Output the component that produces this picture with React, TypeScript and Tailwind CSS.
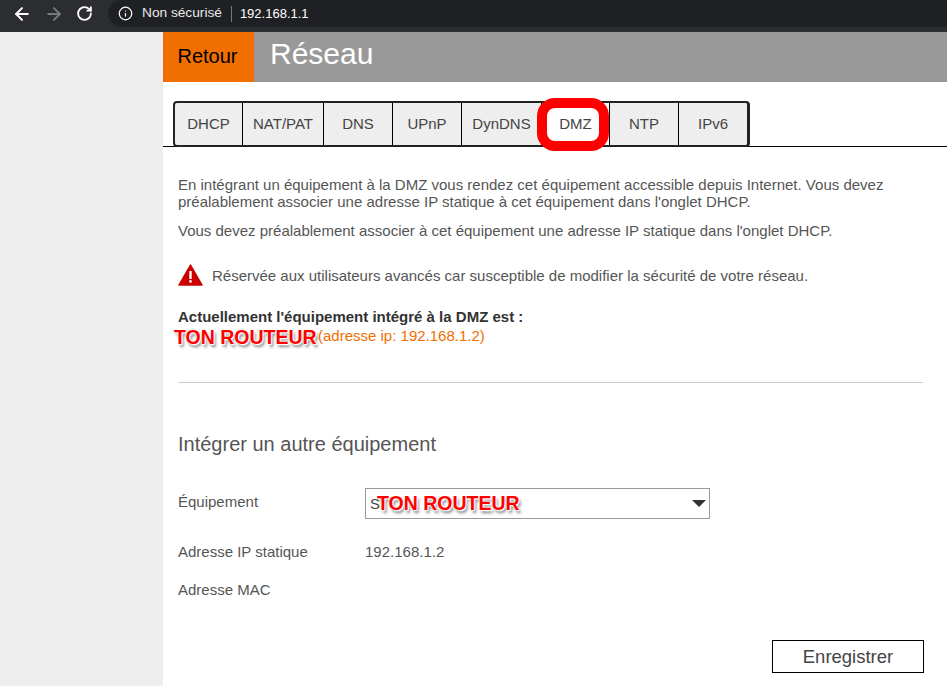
import { ArrowLeft, ArrowRight, RotateCw, Info } from 'lucide-react';

const tabs = [
  { label: 'DHCP', w: 'w-[67px]' },
  { label: 'NAT/PAT', w: 'w-[81px]' },
  { label: 'DNS', w: 'w-[69px]' },
  { label: 'UPnP', w: 'w-[69px]' },
  { label: 'DynDNS', w: 'w-[80px]' },
  { label: 'DMZ', w: 'w-[68px]', active: true },
  { label: 'NTP', w: 'w-[69px]' },
  { label: 'IPv6', w: 'w-[69px]' },
];

function Stamp({ className }: { className: string }) {
  return (
    <span
      className={`absolute font-['Liberation_Sans',sans-serif] font-bold text-[19.5px] leading-[22px] whitespace-nowrap text-[#ff0000] [text-shadow:0_0_2px_#fff,0_0_3px_#fff,1px_1px_1px_#fff,2px_3px_3px_#777] ${className}`}
    >
      TON ROUTEUR
    </span>
  );
}

export default function App() {
  return (
    <div className="h-[686px] w-[947px] overflow-hidden bg-white font-['Liberation_Sans',Arial,sans-serif] text-[#555]">
      {/* Browser bar */}
      <div className="flex h-[32px] items-center bg-[#2c2d30]">
        <div className="flex items-center gap-[9px] pl-[12px] pb-[5px]">
          <ArrowLeft className="h-[20px] w-[20px] text-white" strokeWidth={2.4} />
          <ArrowRight className="ml-[3px] h-[20px] w-[20px] text-[#77787a]" strokeWidth={2.4} />
          <RotateCw className="ml-[3px] h-[17px] w-[17px] text-white" strokeWidth={2.6} />
        </div>
        <div className="ml-[15px] mb-[5px] flex h-[27px] flex-1 items-center rounded-l-full bg-[#1f2023] pl-[10px] text-[13px] text-[#e8eaed]">
          <Info className="h-[15px] w-[15px] text-white" strokeWidth={2} />
          <span className="ml-[9px] text-[13.7px]">Non sécurisé</span>
          <span className="ml-[9px] mr-[8px] h-[16px] w-px bg-[#77787a]" />
          <span className="text-white">192.168.1.1</span>
        </div>
      </div>

      <div className="flex h-[654px]">
        <div className="w-[163px] shrink-0 bg-[#eeeeee]" />
        <div className="relative flex-1">
          {/* Title */}
          <div className="flex h-[50px] bg-[#999999]">
            <div className="flex w-[91px] items-center justify-center bg-[#f16e00] pb-[2px] pr-[2px] text-[20px] text-black">Retour</div>
            <h1 className="ml-[16px] pt-[2px] text-[30px] leading-[40px] text-white">Réseau</h1>
          </div>

          {/* Tabs */}
          <div className="h-[65px] border-b border-black pt-[19px]">
            <div className="relative ml-[10px] flex h-[46px] w-fit rounded-[4px] border-2 border-[#222] border-r-[3px] bg-[#eeeeee]">
              {tabs.map((t, i) => (
                <div
                  key={t.label}
                  className={`flex items-center justify-center pt-[1px] text-[15px] text-[#444] ${t.w} ${i > 0 ? 'border-l border-black' : ''} ${t.active ? 'bg-white' : ''}`}
                >
                  {t.label}
                </div>
              ))}
              <div className="absolute left-[362px] top-[-5px] h-[53px] w-[72px] rounded-[18px] border-[10px] border-[#ff0000]" />
            </div>
          </div>

          {/* Content */}
          <div className="pl-[15px] pr-[24px] text-[15px] leading-[17px]">
            <p className="mt-[29px]">
              En intégrant un équipement à la DMZ vous rendez cet équipement accessible depuis Internet. Vous devez préalablement associer une adresse IP statique à cet équipement dans l'onglet DHCP.
            </p>
            <p className="mt-[12px]">
              Vous devez préalablement associer à cet équipement une adresse IP statique dans l'onglet DHCP.
            </p>
            <div className="mt-[25px] flex items-center">
              <svg viewBox="0 0 24 22" className="h-[22px] w-[25px]">
                <path d="M12 1 L23.5 21 H.5 Z" fill="#cd0000" stroke="#cd0000" strokeLinejoin="round" strokeWidth="1.5" />
                <rect x="10.8" y="7" width="2.4" height="8" fill="#fff" />
                <rect x="10.8" y="16.2" width="2.4" height="2.4" fill="#fff" />
              </svg>
              <span className="ml-[9px]">Réservée aux utilisateurs avancés car susceptible de modifier la sécurité de votre réseau.</span>
            </div>
            <p className="mt-[22px] font-bold text-[#333]">Actuellement l'équipement intégré à la DMZ est :</p>
            <p className="ml-[140px] mt-[2px] text-[#f16e00]">(adresse ip: 192.168.1.2)</p>
            <hr className="mt-[38px] border-[#ccc]" />
            <h2 className="mt-[49px] text-[20px] leading-[24px]">Intégrer un autre équipement</h2>

            <div className="mt-[32px] flex">
              <span className="w-[187px] pt-[5px]">Équipement</span>
              <div className="flex h-[31px] w-[345px] items-center justify-between border border-[#999] pl-[4px] pr-[3px]">
                <span className="text-[#444]">S</span>
                <span className="h-0 w-0 border-x-[7px] border-t-[7px] border-x-transparent border-t-[#333]" />
              </div>
            </div>
            <div className="mt-[24px] flex">
              <span className="w-[187px]">Adresse IP statique</span>
              <span>192.168.1.2</span>
            </div>
            <div className="mt-[21px]">Adresse MAC</div>
            <div className="mt-[42px] flex justify-end">
              <button className="-mr-px h-[33px] w-[152px] border border-black text-[18.5px] text-[#444]">Enregistrer</button>
            </div>
          </div>

          <Stamp className="left-[11px] top-[294px]" />
          <Stamp className="left-[214px] top-[460px]" />
        </div>
      </div>
    </div>
  );
}
